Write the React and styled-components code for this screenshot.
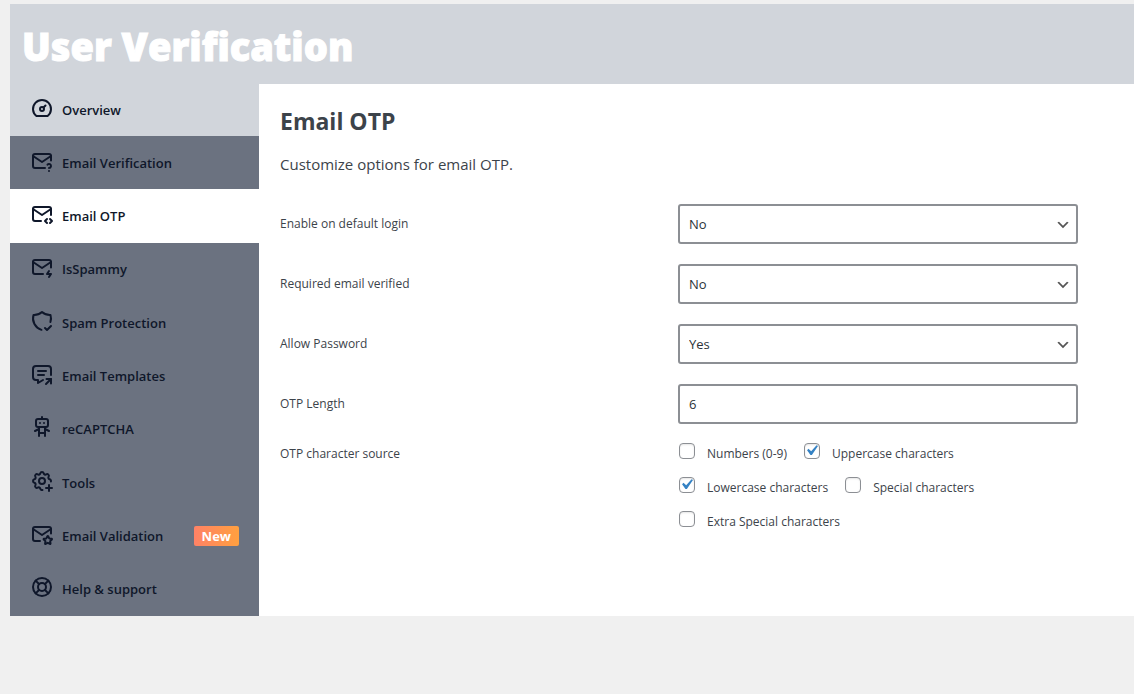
import { useState } from "react";
import styled, { createGlobalStyle, css } from "styled-components";
import {
  TbDashboard,
  TbLifebuoy,
  TbMailBolt,
  TbMailCode,
  TbMailQuestion,
  TbMailStar,
  TbMessageShare,
  TbRobot,
  TbSettingsPlus,
  TbShieldCheck,
} from "react-icons/tb";

const GlobalStyle = createGlobalStyle`
  * {
    box-sizing: border-box;
  }
  body {
    margin: 0;
    background-color: #f0f0f0;
    color: #3c434a;
    font-family: "Segoe UI", "Open Sans", "Noto Sans", sans-serif;
    font-size: 12px;
    line-height: 20px;
  }
`;

const Page = styled.div`
  padding: 4px 0 0 10px;
`;

const Header = styled.header`
  display: flex;
  align-items: center;
  height: 80px;
  padding: 4px 12px 0;
  background-color: #d1d5db;
`;

const Title = styled.h1`
  margin: 0;
  color: white;
  font-family: "Segoe UI", "Open Sans", sans-serif;
  font-size: 38px;
  font-weight: 900;
  line-height: 48px;
  -webkit-text-stroke: 1px white;
`;

const Body = styled.div`
  display: flex;
`;

const Sidebar = styled.nav`
  display: flex;
  flex-direction: column;
  flex: 0 0 249px;
  background-color: #6b7280;
`;

const NavItem = styled.button`
  display: flex;
  flex: 1;
  align-items: center;
  gap: 8px;
  width: 100%;
  min-height: 52px;
  padding: 0 20px;
  border: none;
  background-color: transparent;
  color: #0f172a;
  font-family: inherit;
  font-size: 13px;
  font-weight: 600;
  line-height: 20px;
  text-align: left;
  cursor: pointer;
  svg {
    flex: none;
    width: 24px;
    height: 24px;
    margin-bottom: 4px;
  }
  ${({ $highlight }) =>
    $highlight &&
    css`
      flex: 0 0 52px;
      background-color: #d1d5db;
    `}
  ${({ $active }) =>
    $active &&
    css`
      background-color: white;
    `}
`;

const Badge = styled.span`
  margin-left: auto;
  padding: 0 8px;
  border-radius: 2px;
  background: linear-gradient(to right, #ff8266, #ffa03f);
  color: white;
  font-weight: 700;
`;

const Content = styled.main`
  flex: 1;
  min-width: 0;
  padding: 23px 56px 84px 21px;
  background-color: white;
`;

const Heading = styled.h2`
  margin: 0 0 17px;
  font-size: 23px;
  font-weight: 700;
  line-height: 28px;
`;

const Intro = styled.p`
  margin: 0 0 28px;
  font-size: 15px;
  line-height: 24px;
`;

const Field = styled.div`
  display: flex;
  align-items: center;
  justify-content: space-between;
  margin-bottom: 20px;
`;

const FieldGroup = styled.fieldset`
  display: flex;
  justify-content: space-between;
  min-width: 0;
  margin: 0;
  padding: 0;
  border: none;
`;

const control = css`
  width: 100%;
  height: 40px;
  padding: 0 9px;
  border: 2px solid #8c8f94;
  border-radius: 3px;
  background-color: white;
  color: #2c3338;
  font-family: inherit;
  font-size: 13px;
  line-height: 28px;
`;

const SelectBox = styled.div`
  display: grid;
  align-items: center;
  width: 400px;
  svg {
    grid-area: 1 / 1;
    justify-self: end;
    width: 16px;
    height: 16px;
    margin: 2px 7px 0 0;
    pointer-events: none;
  }
`;

const Select = styled.select`
  ${control}
  grid-area: 1 / 1;
  appearance: none;
  padding-right: 24px;
`;

const Input = styled.input`
  ${control}
  width: 400px;
`;

const Options = styled.div`
  display: flex;
  flex-wrap: wrap;
  align-content: flex-start;
  gap: 14px 16px;
  width: 400px;
`;

const Option = styled.label`
  display: flex;
  align-items: center;
  gap: 12px;
`;

const Check = styled.span`
  display: grid;
  grid-template-columns: 17px;
  height: 20px;
  margin-top: -1px;
  margin-bottom: 1px;
  svg {
    grid-area: 1 / 1;
    width: 21px;
    height: 21px;
    margin: -3px 0 0 -2px;
    pointer-events: none;
  }
`;

const Checkbox = styled.input`
  grid-area: 1 / 1;
  appearance: none;
  width: 16px;
  height: 16px;
  margin: 0 0 0 1px;
  border: 1px solid #8c8f94;
  border-radius: 4px;
  background-color: white;
  box-shadow: inset 0 1px 2px rgba(0, 0, 0, 0.1);
`;

const menu = [
  { label: "Overview", icon: TbDashboard, highlight: true },
  { label: "Email Verification", icon: TbMailQuestion },
  { label: "Email OTP", icon: TbMailCode },
  { label: "IsSpammy", icon: TbMailBolt },
  { label: "Spam Protection", icon: TbShieldCheck },
  { label: "Email Templates", icon: TbMessageShare },
  { label: "reCAPTCHA", icon: TbRobot },
  { label: "Tools", icon: TbSettingsPlus },
  { label: "Email Validation", icon: TbMailStar, badge: "New" },
  { label: "Help & support", icon: TbLifebuoy },
];

const selects = [
  { id: "default-login", label: "Enable on default login", value: "No" },
  { id: "email-verified", label: "Required email verified", value: "No" },
  { id: "allow-password", label: "Allow Password", value: "Yes" },
];

const sources = [
  "Numbers (0-9)",
  "Uppercase characters",
  "Lowercase characters",
  "Special characters",
  "Extra Special characters",
];

const App = () => {
  const [active, setActive] = useState("Email OTP");
  const [checked, setChecked] = useState([
    "Uppercase characters",
    "Lowercase characters",
  ]);

  const onCheckHandler = (source) => {
    if (checked.includes(source)) {
      setChecked(checked.filter((item) => item !== source));
    } else {
      setChecked([...checked, source]);
    }
  };

  return (
    <Page>
      <GlobalStyle />
      <Header>
        <Title>User Verification</Title>
      </Header>
      <Body>
        <Sidebar>
          {menu.map(({ label, icon: Icon, highlight, badge }) => (
            <NavItem
              key={label}
              type="button"
              $highlight={highlight}
              $active={active === label}
              onClick={() => setActive(label)}
            >
              <Icon />
              {label}
              {badge && <Badge>{badge}</Badge>}
            </NavItem>
          ))}
        </Sidebar>
        <Content>
          <Heading>Email OTP</Heading>
          <Intro>Customize options for email OTP.</Intro>
          {selects.map(({ id, label, value }) => (
            <Field key={id}>
              <label htmlFor={id}>{label}</label>
              <SelectBox>
                <Select id={id} defaultValue={value}>
                  <option>No</option>
                  <option>Yes</option>
                </Select>
                <svg viewBox="0 0 20 20" aria-hidden="true">
                  <path d="M5 6l5 5 5-5 2 1-7 7-7-7 2-1z" fill="#555" />
                </svg>
              </SelectBox>
            </Field>
          ))}
          <Field>
            <label htmlFor="otp-length">OTP Length</label>
            <Input id="otp-length" type="text" defaultValue="6" />
          </Field>
          <FieldGroup aria-labelledby="otp-source">
            <span id="otp-source">OTP character source</span>
            <Options>
              {sources.map((source) => (
                <Option key={source}>
                  <Check>
                    <Checkbox
                      type="checkbox"
                      checked={checked.includes(source)}
                      onChange={() => onCheckHandler(source)}
                    />
                    {checked.includes(source) && (
                      <svg viewBox="0 0 20 20" aria-hidden="true">
                        <path
                          d="M14.83 4.89l1.34.94-5.81 8.38H9.02L5.78 9.67l1.34-1.25 2.57 2.4z"
                          fill="#3582c4"
                        />
                      </svg>
                    )}
                  </Check>
                  {source}
                </Option>
              ))}
            </Options>
          </FieldGroup>
        </Content>
      </Body>
    </Page>
  );
};

export default App;
